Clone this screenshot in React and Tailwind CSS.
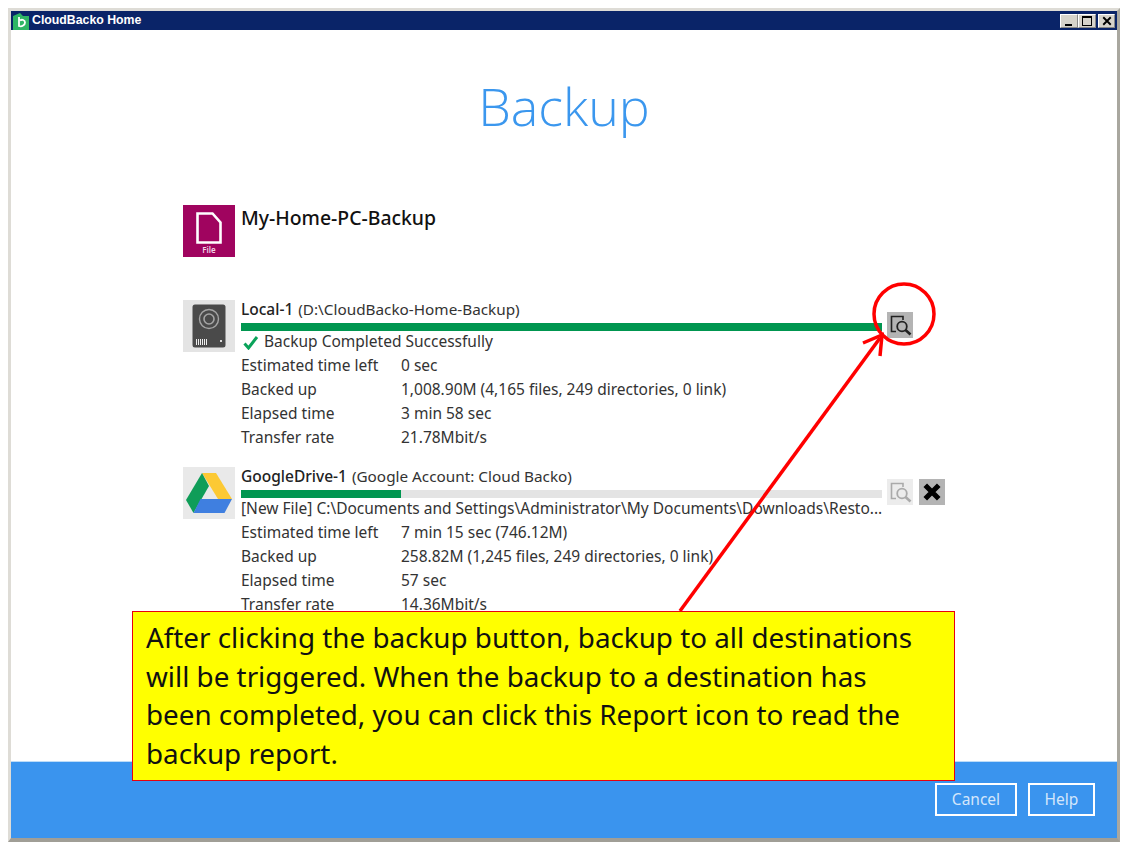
const FONT = "font-['Noto_Sans','Open_Sans',sans-serif]";

const CrossIcon = ({ size, weight }) => (
  <svg width={size} height={size} viewBox="0 0 16 16" fill="none">
    <path d="M2 2l12 12M14 2L2 14" stroke="#000" strokeWidth={weight} />
  </svg>
);

const ReportIcon = ({ color = "#222" }) => (
  <svg width="26" height="26" viewBox="0 0 26 26" fill="none">
    <path d="M9 19.500H4.500V4.500H16V8" stroke={color} strokeWidth="1.600" />
    <circle cx="15" cy="14.500" r="4.800" stroke={color} strokeWidth="1.800" />
    <path d="M18.500 18l5 4.500" stroke={color} strokeWidth="2.600" />
  </svg>
);

const FileIcon = () => (
  <div className="w-[52px] h-[52px] bg-[#a0045f] flex flex-col items-center pt-[7px] shrink-0">
    <svg width="26" height="32" viewBox="0 0 26 32" fill="none">
      <path d="M1.500 1.500h15l8 9v20h-23z" stroke="#fff" strokeWidth="2.600" />
    </svg>
    <span className="text-[8px] leading-[9px] mt-[1px] font-semibold text-[#f2d5e5]">File</span>
  </div>
);

const DiskIcon = () => (
  <div className="w-[52px] h-[52px] bg-[#e4e4e4] flex items-center justify-center shrink-0">
    <svg width="34" height="44" viewBox="0 0 34 44">
      <rect x="0.500" y="0.500" width="33" height="43" rx="2.500" fill="#4a4a4a" />
      <circle cx="17" cy="15" r="9.500" fill="none" stroke="#a5a5a5" strokeWidth="1.400" />
      <circle cx="17" cy="15" r="5" fill="none" stroke="#a5a5a5" strokeWidth="1.600" />
      <path d="M4.500 35v6M6.500 35v6M8.500 35v6M10.500 35v6M12.500 35v6M14.500 35v6" stroke="#eee" strokeWidth="1" />
      <rect x="28" y="36" width="2" height="2" fill="#ddd" />
    </svg>
  </div>
);

const DriveIcon = () => (
  <div className="w-[52px] h-[52px] bg-[#e9e9e9] flex items-center justify-center shrink-0">
    <svg width="46" height="40" viewBox="0 0 46 40">
      <path d="M16 0h14l16 26H32z" fill="#fcc934" />
      <path d="M16 0L0 27l7.500 13L23 13z" fill="#0f9d58" />
      <path d="M14.500 26H46l-7.500 14H7.500z" fill="#3f7fe0" />
    </svg>
  </div>
);

const Detail = ({ label, value }) => (
  <div className="flex h-6 items-center whitespace-nowrap">
    <span className="w-40 shrink-0">{label}</span>
    <span>{value}</span>
  </div>
);

const Destination = ({ icon, name, path, percent, status, details, actions }) => (
  <div className="flex gap-[6px] w-[763px]">
    {icon}
    <div className="flex-1 min-w-0">
      <div className="h-[17px] flex items-center whitespace-nowrap">
        <span className="font-medium text-[#222]">{name}</span>
        <span className="ml-[5px] text-[15.300px]">{path}</span>
      </div>
      <div className="flex items-start relative">
        <div className="w-[641px] h-2 mt-[6px] bg-[#e4e4e4]">
          <div className="h-full bg-[#009650]" style={{ width: `${percent}%` }} />
        </div>
        <div className="absolute left-[646px] top-[-5px] flex gap-[6px]">{actions}</div>
      </div>
      <div className="mt-[-2px] w-[645px]">
        <div className="h-6 flex items-center whitespace-nowrap overflow-hidden">{status}</div>
        {details.map((d) => (
          <Detail key={d[0]} label={d[0]} value={d[1]} />
        ))}
      </div>
    </div>
  </div>
);

export default function App() {
  return (
    <div className={`w-[1128px] h-[848px] bg-white relative overflow-hidden ${FONT}`}>
      <div className="absolute left-[8px] top-[8px] w-[1112px] h-[834px] flex flex-col bg-white border-l-[3px] border-t-[3px] border-r-[3px] border-b-[4px] border-t-[#dedcd6] border-l-[#dedcd6] border-r-[#a9a79f] border-b-[#a09e96]">
        {/* title bar */}
        <div className="h-[19px] bg-[#0a2468] flex items-center justify-between shrink-0">
          <div className="flex items-center gap-[2px] pl-[1px]">
            <svg width="18" height="18" viewBox="0 0 18 18">
              <path d="M1 4l7-3 3 3h6v14H1z" fill="#2fb565" />
              <path d="M7 5v9c3 1 6-1 6-3.500s-3-3.500-5-2" fill="none" stroke="#fff" strokeWidth="1.800" />
            </svg>
            <span className="text-white text-[12.300px] font-bold font-['Liberation_Sans',sans-serif]">CloudBacko Home</span>
          </div>
          <div className="flex items-center pr-[2px]">
            {["min", "max"].map((k) => (
              <div key={k} className="w-[18px] h-[14px] bg-[#d6d3cb] border border-[#888] border-t-white border-l-white relative">
                {k === "min" ? (
                  <div className="absolute left-[4px] bottom-[1px] w-[7px] h-[2px] bg-black" />
                ) : (
                  <div className="absolute left-[3px] top-[1px] w-[10px] h-[10px] border border-black border-t-2" />
                )}
              </div>
            ))}
            <div className="w-[17px] h-[14px] ml-[2px] bg-[#d6d3cb] border border-[#888] border-t-white border-l-white flex items-center justify-center">
              <CrossIcon size={10} weight={3} />
            </div>
          </div>
        </div>

        {/* body */}
        <div className="flex-1 flex flex-col min-h-0">
          <h1 className="text-center text-[52px] leading-[70px] font-light font-['Open_Sans',sans-serif] text-[#3b97ee] mt-[41px]">Backup</h1>
          <div className="pl-[172px] text-[15.500px] leading-6 text-[#333]">
            <div className="flex gap-[6px] mt-[64px] h-[52px]">
              <FileIcon />
              <span className="text-[19.400px] leading-[26px] font-medium text-[#111]">My-Home-PC-Backup</span>
            </div>
            <div className="mt-[43px]">
              <Destination
                icon={<DiskIcon />}
                name="Local-1"
                path="(D:\CloudBacko-Home-Backup)"
                percent={100}
                status={
                  <>
                    <svg width="16" height="14" viewBox="0 0 16 14" className="mt-[4px] mr-[5px] ml-[2px]">
                      <path d="M1.500 7.500l4 4.500 8.500-11" fill="none" stroke="#0aa35a" strokeWidth="3" />
                    </svg>
                    Backup Completed Successfully
                  </>
                }
                details={[
                  ["Estimated time left", "0 sec"],
                  ["Backed up", "1,008.90M (4,165 files, 249 directories, 0 link)"],
                  ["Elapsed time", "3 min 58 sec"],
                  ["Transfer rate", "21.78Mbit/s"],
                ]}
                actions={
                  <div className="w-[26px] h-[26px] bg-[#b4b4b4]">
                    <ReportIcon />
                  </div>
                }
              />
            </div>
            <div className="mt-[18px]">
              <Destination
                icon={<DriveIcon />}
                name="GoogleDrive-1"
                path="(Google Account: Cloud Backo)"
                percent={25}
                status="[New File] C:\Documents and Settings\Administrator\My Documents\Downloads\Resto..."
                details={[
                  ["Estimated time left", "7 min 15 sec (746.12M)"],
                  ["Backed up", "258.82M (1,245 files, 249 directories, 0 link)"],
                  ["Elapsed time", "57 sec"],
                  ["Transfer rate", "14.36Mbit/s"],
                ]}
                actions={
                  <>
                    <div className="w-[26px] h-[26px] bg-[#ececec]">
                      <ReportIcon color="#aaa" />
                    </div>
                    <div className="w-[26px] h-[26px] bg-[#b4b4b4] flex items-center justify-center">
                      <CrossIcon size={18} weight={4.500} />
                    </div>
                  </>
                }
              />
            </div>
          </div>
        </div>

        {/* footer */}
        <div className="h-[77px] bg-[#3a94ee] border-t border-t-[#bcdcf8] shrink-0 flex justify-end items-start gap-[11px] pt-[21px] pr-[22px] text-[15.500px] text-[#d3e6fb]">
          <button className="w-[82px] h-[33px] border-2 border-white">Cancel</button>
          <button className="w-[67px] h-[33px] border-2 border-white">Help</button>
        </div>
      </div>

      {/* annotation */}
      <svg width="1128" height="848" className="absolute left-0 top-0 pointer-events-none">
        <circle cx="904" cy="314" r="30" fill="none" stroke="#f00" strokeWidth="3.500" />
        <path d="M680 611L880 338" stroke="#f00" strokeWidth="3.500" fill="none" />
        <path d="M863 343L882 335L880 356" stroke="#f00" strokeWidth="3.500" fill="none" />
      </svg>
      <div className="absolute left-[132px] top-[611px] w-[823px] h-[170px] bg-[#ffff00] border border-[#e8000e] pl-[13px] pr-[30px] pt-[6px] text-[27.800px] leading-[38.500px] text-[#111]">
        After clicking the backup button, backup to all destinations will be triggered. When the backup to a destination has been completed, you can click this Report icon to read the backup report.
      </div>
    </div>
  );
}
